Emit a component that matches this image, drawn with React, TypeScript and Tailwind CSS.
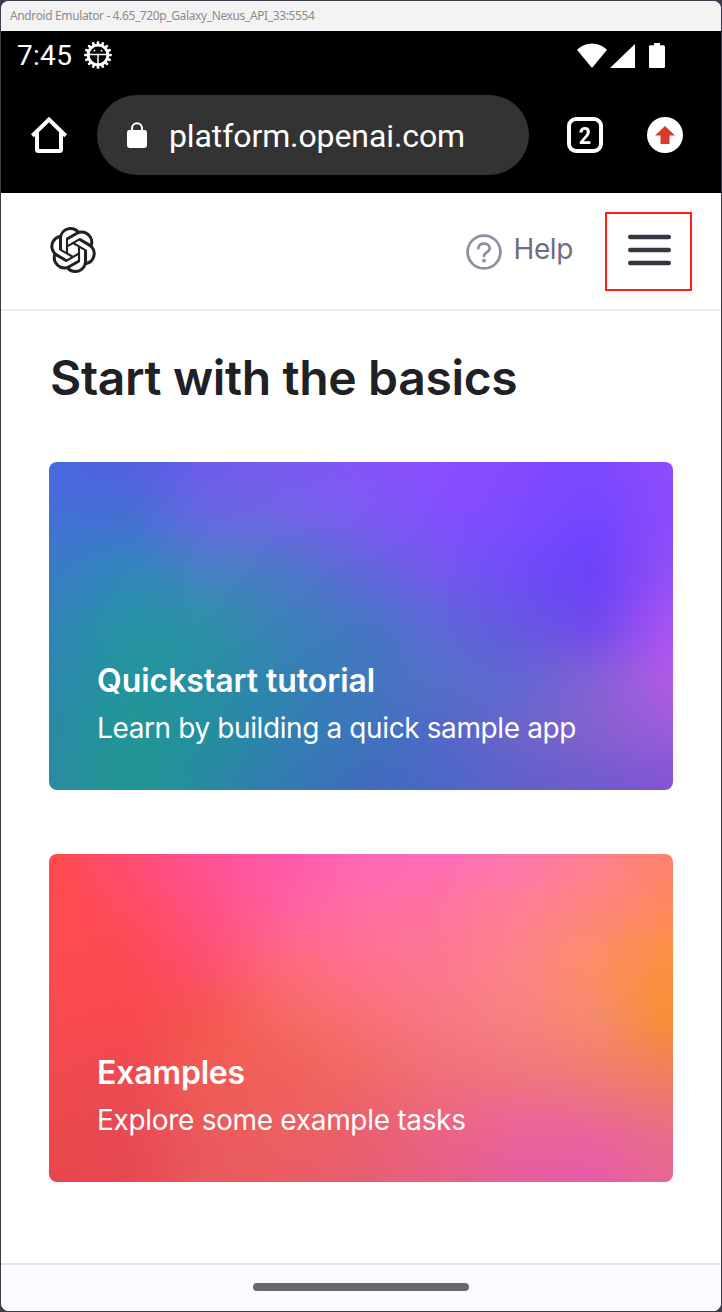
import React from "react";
import { SiOpenai } from "react-icons/si";

const quickstartMesh = [
  ["#4a68de", "#5160e2", "#6d5ceb", "#7a5af0", "#8455f8", "#8a4eff", "#844aff", "#7b4aff", "#914cfa"],
  ["#4470d8", "#4470d2", "#6868e2", "#6f65e4", "#7d5bf2", "#8150fc", "#7d4cff", "#7346ff", "#8d4cfc"],
  ["#3a7cc4", "#2f88bb", "#4781c2", "#4b7ac6", "#5f68d8", "#7658ee", "#704cfa", "#6842f8", "#9450f6"],
  ["#3084b8", "#2594a4", "#2b93a4", "#3a82b8", "#4378c2", "#5c69d6", "#6658e0", "#7048ee", "#ac54f4"],
  ["#2c88ae", "#23959a", "#288ea4", "#3382b2", "#3f78bc", "#5670c8", "#6068d0", "#8562d4", "#b65ae4"],
  ["#298aa6", "#219794", "#248f9e", "#2e82b0", "#3d74bc", "#5068c8", "#6c65cc", "#8262cc", "#9a5cdc"],
  ["#2a8ca2", "#219690", "#288ba2", "#3579b2", "#406bbc", "#4a68c4", "#5f60ca", "#6f5ace", "#8252d4"],
];

const examplesMesh = [
  ["#ff4b4b", "#ff4d75", "#ff5298", "#ff58aa", "#ff66ba", "#ff6cba", "#ff76b0", "#ff8096", "#ff806c"],
  ["#ff4c4c", "#ff4c60", "#ff5282", "#ff60a0", "#ff70a2", "#ff749e", "#ff8094", "#ff867e", "#ff8a5a"],
  ["#fd4d50", "#fc4a50", "#fb5070", "#ff6a7c", "#ff7190", "#fc7890", "#fe848a", "#fc8f64", "#fc913c"],
  ["#f84b4f", "#f8494e", "#f5564e", "#f66a62", "#f97074", "#f87884", "#f88280", "#f58c6c", "#f69030"],
  ["#f04b50", "#ee4850", "#f15c54", "#f06059", "#f06a64", "#f07078", "#f0767e", "#f07c74", "#f08058"],
  ["#ec484e", "#e84a52", "#ec5a5c", "#ee6060", "#ea606c", "#ec6484", "#ec649a", "#ea6698", "#ea7084"],
  ["#e6474a", "#e64850", "#e85a5e", "#e85c62", "#e65e72", "#e66084", "#e45e9c", "#e85aac", "#e46890"],
];

/* Colour mesh: each row is a horizontal ramp that fades in over the row above it. */
function Mesh({ id, rows }: { id: string; rows: string[][] }) {
  const step = 328 / (rows.length - 1);
  return (
    <svg className="absolute inset-0 h-full w-full" viewBox="0 0 624 328" preserveAspectRatio="none">
      <defs>
        <filter id={`${id}-soft`} filterUnits="userSpaceOnUse" x="-60" y="-60" width="744" height="448" colorInterpolationFilters="sRGB">
          <feGaussianBlur stdDeviation="13" />
        </filter>
        {rows.map((row, i) => (
          <React.Fragment key={i}>
            <linearGradient id={`${id}-c${i}`} gradientUnits="userSpaceOnUse" x1="0" y1="0" x2="624" y2="0">
              {row.map((c, j) => (
                <stop key={j} offset={j / (row.length - 1)} stopColor={c} />
              ))}
            </linearGradient>
            <linearGradient id={`${id}-f${i}`} gradientUnits="userSpaceOnUse" x1="0" y1={(i - 1) * step} x2="0" y2={i * step}>
              <stop offset="0" stopColor="#fff" stopOpacity={i === 0 ? 1 : 0} />
              <stop offset="1" stopColor="#fff" />
            </linearGradient>
            <mask id={`${id}-m${i}`} maskUnits="userSpaceOnUse" x="-60" y="-60" width="744" height="448">
              <rect x="-60" y="-60" width="744" height="448" fill={`url(#${id}-f${i})`} />
            </mask>
          </React.Fragment>
        ))}
      </defs>
      <g filter={`url(#${id}-soft)`}>
        {rows.map((_, i) => (
          <rect key={i} x="-60" y="-60" width="744" height="448" fill={`url(#${id}-c${i})`} mask={`url(#${id}-m${i})`} />
        ))}
      </g>
    </svg>
  );
}

function DebugIcon() {
  return (
    <svg width="28" height="28" viewBox="0 0 28 28" className="mb-[2px] block">
      {Array.from({ length: 16 }, (_, i) => (
        <rect key={i} x="12.7" y="0.2" width="2.6" height="4.5" rx="0.9" fill="#fff" transform={`rotate(${i * 22.5} 14 14)`} />
      ))}
      <circle cx="14" cy="14" r="9.8" fill="#000" stroke="#fff" strokeWidth="2.8" />
      <path d="M4.5 13.4h19M14 13.4v9.500" stroke="#fff" strokeWidth="1.500" />
      <circle cx="10.400" cy="9.700" r="0.900" fill="#fff" />
      <circle cx="17.600" cy="9.700" r="0.900" fill="#fff" />
    </svg>
  );
}

function StatusBar() {
  return (
    <div className="flex h-[50px] items-center justify-between pl-4 pr-[55px] font-[Roboto,sans-serif] text-white">
      <div className="flex items-center gap-[12px]">
        <span className="text-[28px] leading-none tracking-[0.3px]">7:45</span>
        <DebugIcon />
      </div>
      <svg width="90" height="28" viewBox="0 0 90 28" fill="#fff" className="mb-px">
        <path d="M1 7.8C10-.7 22-.7 31 7.8L16 26z" />
        <path d="M59 2v24H34z" />
        <path d="M78 1h6v2.3h3.400c.9 0 1.600.7 1.600 1.600v19.500c0 .9-.7 1.600-1.600 1.600H74.600c-.9 0-1.600-.7-1.600-1.600V4.900c0-.9.7-1.600 1.600-1.600H78z" />
      </svg>
    </div>
  );
}

function BrowserBar() {
  return (
    <div className="flex h-28 items-start pl-[30px] pt-[14px] font-[Roboto,sans-serif] text-white">
      <div className="flex h-20 items-center">
        <svg width="36" height="36" viewBox="0 0 36 36" fill="none" stroke="#fff" strokeWidth="4">
          <path d="M1.300 18.700L18 2.500l16.700 16.200" />
          <path d="M6 15.500V32.500a1.500 1.500 0 0 0 1.500 1.500h21a1.500 1.500 0 0 0 1.500-1.500V15.500" />
        </svg>
      </div>
      <div className="ml-[30px] flex h-20 w-[432px] items-center rounded-full bg-[#333333] pl-[30px]">
        <svg width="20" height="26" viewBox="0 0 20 26">
          <rect y="8" width="20" height="18" rx="2.400" fill="#fff" />
          <path d="M5 9V6.200a5 5 0 0 1 10 0V9" fill="none" stroke="#fff" strokeWidth="2" />
        </svg>
        <span className="ml-[22px] pt-[2px] text-[32px] leading-none tracking-[-0.1px]">platform.openai.com</span>
      </div>
      <div className="ml-[38px] flex h-20 items-center gap-11">
        <div className="flex size-9 items-center justify-center rounded-[9px] border-4 border-white">
          <span className="pt-px font-[Roboto,sans-serif] text-[24px] font-bold leading-none scale-x-90">2</span>
        </div>
        <div className="flex size-9 items-center justify-center rounded-full bg-white">
          <svg width="20" height="18" viewBox="0 0 20 18" fill="#d93b2b">
            <path d="M10 0l10 9.500h-5.500V18h-9V9.500H0z" />
          </svg>
        </div>
      </div>
    </div>
  );
}

function SiteHeader() {
  return (
    <header className="flex h-[118px] items-start justify-between border-b-2 border-[#ececf1] pl-[49px] pr-[29px] pt-[19px]">
      <SiOpenai className="mt-[15px] size-[46px] text-[#202123]" />
      <div className="flex items-start">
        <svg className="mt-[22px]" width="36" height="36" viewBox="0 0 36 36" fill="none" stroke="#8e8ea0" strokeWidth="2.700">
          <circle cx="18" cy="18" r="16.400" />
          <path d="M12.300 14.200c.4-3 2.700-4.500 5.700-4.500 3.200 0 5.700 1.700 5.700 4.500 0 4.300-5.600 4.100-5.600 7.800" strokeLinecap="round" />
          <circle cx="18" cy="26.700" r="1.900" fill="#8e8ea0" stroke="none" />
        </svg>
        <span className="ml-[12px] mt-[19px] text-[28px] leading-9 tracking-[-0.4px] text-[#6e6e80]">Help</span>
        <button className="ml-[32px] flex h-[79px] w-[87px] items-center justify-center border-2 border-[#ff1d12] pb-[3px] pl-px" aria-label="Menu">
          <svg width="43" height="32" viewBox="0 0 43 32" stroke="#353740" strokeWidth="4.400" strokeLinecap="round" className="shrink-0">
            <path d="M2.200 3h38.600M2.200 16h38.600M2.200 29h38.600" />
          </svg>
        </button>
      </div>
    </header>
  );
}

export default function App() {
  return (
    <div className="h-[1312px] w-[722px] overflow-hidden bg-[#3c3b49] p-px">
      <div className="flex h-full flex-col overflow-hidden rounded-lg bg-white font-[Inter,sans-serif]">
        <div className="flex h-[30px] shrink-0 items-center bg-[#f3f3f3] pl-[9px] font-[Noto_Sans,sans-serif] text-[12px] text-[#8b8b8b]">
          <span className="whitespace-nowrap tracking-[-0.38px]">Android Emulator - 4.65_720p_Galaxy_Nexus_API_33:5554</span>
        </div>
        <div className="h-[162px] shrink-0 bg-black">
          <StatusBar />
          <BrowserBar />
        </div>
        <SiteHeader />
        <main className="flex flex-1 flex-col px-12">
          <h1 className="mt-[35px] whitespace-nowrap pl-px text-[48px] font-semibold leading-[64px] tracking-[-0.34px] text-[#202123]">Start with the basics</h1>
          <section className="relative mt-[52px] flex h-[328px] shrink-0 flex-col justify-end overflow-hidden rounded-lg px-12 pb-[39px] text-white">
            <Mesh id="quick" rows={quickstartMesh} />
            <h2 className="relative text-[32px] font-semibold leading-[48px] tracking-[-0.05px]">Quickstart tutorial</h2>
            <p className="relative whitespace-nowrap text-[28px] leading-[46px] tracking-[-0.39px]">Learn by building a quick sample app</p>
          </section>
          <section className="relative mt-16 flex h-[328px] shrink-0 flex-col justify-end overflow-hidden rounded-lg px-12 pb-[39px] text-white">
            <Mesh id="examples" rows={examplesMesh} />
            <h2 className="relative text-[32px] font-semibold leading-[48px] tracking-[-0.2px]">Examples</h2>
            <p className="relative whitespace-nowrap text-[28px] leading-[46px] tracking-[-0.31px]">Explore some example tasks</p>
          </section>
        </main>
        <footer className="flex h-12 shrink-0 justify-center border-t-2 border-[#e3e2ec] bg-[#fdfbff] pt-[18px]">
          <div className="h-2 w-[216px] rounded-full bg-[#69676b]" />
        </footer>
      </div>
    </div>
  );
}
